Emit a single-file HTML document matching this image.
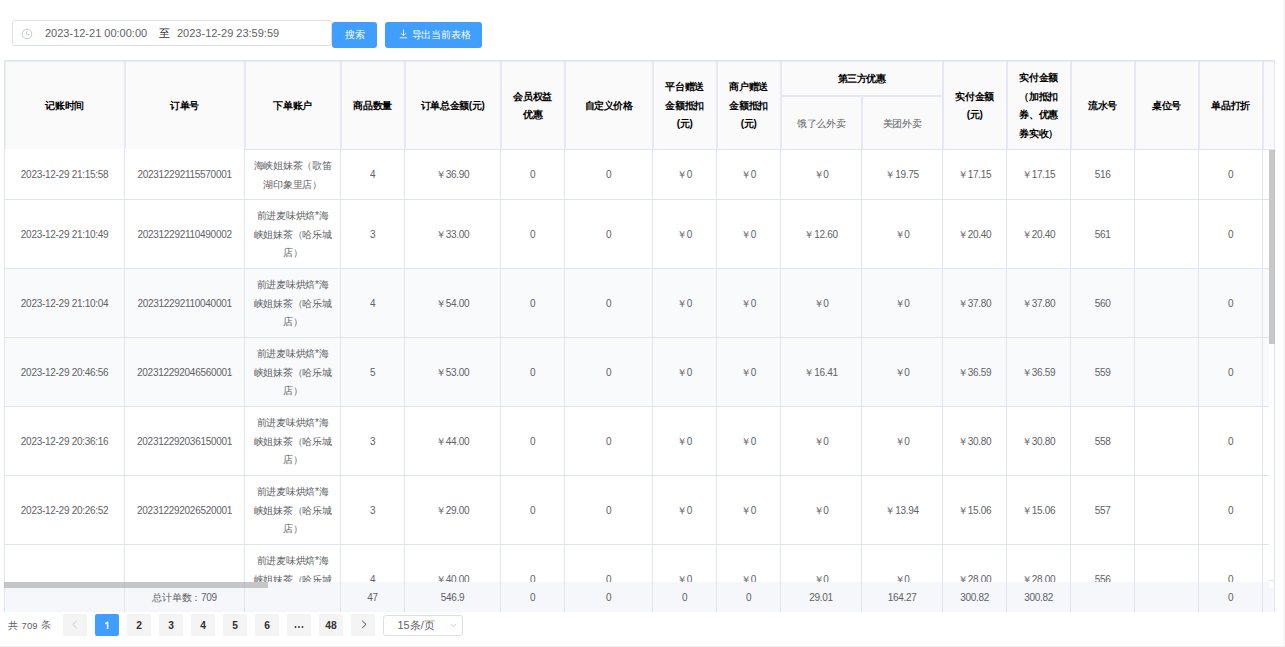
<!DOCTYPE html>
<html><head><meta charset="utf-8"><style>
html,body{margin:0;padding:0;background:#fff;}
body{width:1285px;height:647px;position:relative;overflow:hidden;font-family:"Liberation Sans",sans-serif;}
div{position:absolute;}
.t,.h{text-align:center;white-space:nowrap;}
.t{font-size:10px;letter-spacing:-0.28px;color:#606266;}
.h{font-size:10px;letter-spacing:-0.4px;color:#000000;font-weight:bold;}
</style></head><body>
<div style="left:12px;top:20px;width:320px;height:26px;border:1px solid #DCDFE6;border-radius:3px;box-sizing:border-box;background:#fff"></div>
<svg style="position:absolute;left:21px;top:28px" width="12" height="12" viewBox="0 0 12 12"><circle cx="6" cy="6" r="4.8" fill="none" stroke="#C0C4CC" stroke-width="0.9"/><path d="M5.6 3.2V6.3H8" fill="none" stroke="#C0C4CC" stroke-width="0.9"/></svg>
<div class="t" style="left:45px;top:26.20px;width:115px;height:14px;line-height:14px;font-size:11px;letter-spacing:0;color:#606266;text-align:left">2023-12-21 00:00:00</div>
<div class="t" style="left:154px;top:26.20px;width:20px;height:14px;line-height:14px;font-size:11px;letter-spacing:0;color:#303133;text-align:center">至</div>
<div class="t" style="left:177px;top:26.20px;width:123px;height:14px;line-height:14px;font-size:11px;letter-spacing:0;color:#606266;text-align:left">2023-12-29 23:59:59</div>
<div style="left:332px;top:22px;width:45px;height:25.5px;background:#409EFF;border-radius:3px"></div>
<div class="t" style="left:332.5px;top:27.80px;width:45.0px;height:14px;line-height:14px;font-size:10px;letter-spacing:0;color:#fff;font-weight:500">搜索</div>
<div style="left:385px;top:22px;width:97px;height:25.5px;background:#409EFF;border-radius:3px"></div>
<svg style="position:absolute;left:399px;top:29px" width="9" height="10" viewBox="0 0 9 10"><path d="M4.5 0.5V6.5M2 4.2L4.5 6.7L7 4.2M0.8 8.8H8.2" fill="none" stroke="#fff" stroke-width="0.9"/></svg>
<div class="t" style="left:411.5px;top:27.80px;width:63.5px;height:14px;line-height:14px;font-size:10px;letter-spacing:-0.1px;color:#fff;text-align:left;font-weight:500">导出当前表格</div>
<div style="left:4px;top:60px;width:1270px;height:89px;background:#FAFAFA"></div>
<div style="left:4px;top:269px;width:1265px;height:137px;background:#F9FAFC"></div>
<div style="left:4px;top:582px;width:1270px;height:30px;background:#F5F7FA"></div>
<div style="left:4px;top:60px;width:1271px;height:1px;background:#DFE5EC"></div>
<div style="left:4px;top:61px;width:1271px;height:1px;background:#E9ECF5"></div>
<div style="left:4px;top:150px;width:1px;height:462px;background:#DFE5EC"></div>
<div style="left:4px;top:60px;width:1px;height:90px;background:#DFE5EC"></div>
<div style="left:5px;top:61px;width:1px;height:88px;background:#E9ECF5"></div>
<div style="left:124px;top:150px;width:1px;height:462px;background:#DFE5EC"></div>
<div style="left:124px;top:61px;width:2px;height:88px;background:#E6E9F4"></div>
<div style="left:244px;top:150px;width:1px;height:462px;background:#DFE5EC"></div>
<div style="left:244px;top:61px;width:2px;height:88px;background:#E6E9F4"></div>
<div style="left:340px;top:150px;width:1px;height:462px;background:#DFE5EC"></div>
<div style="left:340px;top:61px;width:2px;height:88px;background:#E6E9F4"></div>
<div style="left:404px;top:150px;width:1px;height:462px;background:#DFE5EC"></div>
<div style="left:404px;top:61px;width:2px;height:88px;background:#E6E9F4"></div>
<div style="left:500px;top:150px;width:1px;height:462px;background:#DFE5EC"></div>
<div style="left:500px;top:61px;width:2px;height:88px;background:#E6E9F4"></div>
<div style="left:564px;top:150px;width:1px;height:462px;background:#DFE5EC"></div>
<div style="left:564px;top:61px;width:2px;height:88px;background:#E6E9F4"></div>
<div style="left:652px;top:150px;width:1px;height:462px;background:#DFE5EC"></div>
<div style="left:652px;top:61px;width:2px;height:88px;background:#E6E9F4"></div>
<div style="left:716px;top:150px;width:1px;height:462px;background:#DFE5EC"></div>
<div style="left:716px;top:61px;width:2px;height:88px;background:#E6E9F4"></div>
<div style="left:780px;top:150px;width:1px;height:462px;background:#DFE5EC"></div>
<div style="left:780px;top:61px;width:2px;height:88px;background:#E6E9F4"></div>
<div style="left:861px;top:150px;width:1px;height:462px;background:#DFE5EC"></div>
<div style="left:861px;top:96px;width:2px;height:53px;background:#E6E9F4"></div>
<div style="left:942px;top:150px;width:1px;height:462px;background:#DFE5EC"></div>
<div style="left:942px;top:61px;width:2px;height:88px;background:#E6E9F4"></div>
<div style="left:1006px;top:150px;width:1px;height:462px;background:#DFE5EC"></div>
<div style="left:1006px;top:61px;width:2px;height:88px;background:#E6E9F4"></div>
<div style="left:1070px;top:150px;width:1px;height:462px;background:#DFE5EC"></div>
<div style="left:1070px;top:61px;width:2px;height:88px;background:#E6E9F4"></div>
<div style="left:1134px;top:150px;width:1px;height:462px;background:#DFE5EC"></div>
<div style="left:1134px;top:61px;width:2px;height:88px;background:#E6E9F4"></div>
<div style="left:1198px;top:150px;width:1px;height:462px;background:#DFE5EC"></div>
<div style="left:1198px;top:61px;width:2px;height:88px;background:#E6E9F4"></div>
<div style="left:1262px;top:150px;width:1px;height:462px;background:#DFE5EC"></div>
<div style="left:1262px;top:61px;width:2px;height:88px;background:#E6E9F4"></div>
<div style="left:1274px;top:150px;width:1px;height:462px;background:#DFE5EC"></div>
<div style="left:1274px;top:61px;width:1px;height:88px;background:#E6E9F4"></div>
<div style="left:780px;top:95px;width:162px;height:2px;background:#E6E9F4"></div>
<div style="left:244px;top:149px;width:1031px;height:1px;background:#DFE5EC"></div>
<div style="left:4px;top:199px;width:1265px;height:1px;background:#DFE5EC"></div>
<div style="left:4px;top:268px;width:1265px;height:1px;background:#DFE5EC"></div>
<div style="left:4px;top:337px;width:1265px;height:1px;background:#DFE5EC"></div>
<div style="left:4px;top:406px;width:1265px;height:1px;background:#DFE5EC"></div>
<div style="left:4px;top:475px;width:1265px;height:1px;background:#DFE5EC"></div>
<div style="left:4px;top:544px;width:1265px;height:1px;background:#DFE5EC"></div>
<div class="h" style="left:4.6px;top:98.90px;width:120.0px;height:14px;line-height:14px;">记账时间</div>
<div class="h" style="left:124.6px;top:98.90px;width:120.0px;height:14px;line-height:14px;">订单号</div>
<div class="h" style="left:244.6px;top:98.90px;width:96.00000000000003px;height:14px;line-height:14px;">下单账户</div>
<div class="h" style="left:340.6px;top:98.90px;width:64.0px;height:14px;line-height:14px;">商品数量</div>
<div class="h" style="left:404.6px;top:98.90px;width:96.0px;height:14px;line-height:14px;">订单总金额(元)</div>
<div class="h" style="left:500.6px;top:89.65px;width:64.0px;height:14px;line-height:14px;">会员权益</div>
<div class="h" style="left:500.6px;top:108.15px;width:64.0px;height:14px;line-height:14px;">优惠</div>
<div class="h" style="left:564.6px;top:98.90px;width:88.0px;height:14px;line-height:14px;">自定义价格</div>
<div class="h" style="left:652.6px;top:80.40px;width:64.0px;height:14px;line-height:14px;">平台赠送</div>
<div class="h" style="left:652.6px;top:98.90px;width:64.0px;height:14px;line-height:14px;">金额抵扣</div>
<div class="h" style="left:652.6px;top:117.40px;width:64.0px;height:14px;line-height:14px;">(元)</div>
<div class="h" style="left:716.6px;top:80.40px;width:64.0px;height:14px;line-height:14px;">商户赠送</div>
<div class="h" style="left:716.6px;top:98.90px;width:64.0px;height:14px;line-height:14px;">金额抵扣</div>
<div class="h" style="left:716.6px;top:117.40px;width:64.0px;height:14px;line-height:14px;">(元)</div>
<div class="h" style="left:780.6px;top:71.90px;width:162.0px;height:14px;line-height:14px;">第三方优惠</div>
<div class="t" style="left:780.6px;top:116.90px;width:81.0px;height:14px;line-height:14px;">饿了么外卖</div>
<div class="t" style="left:861.6px;top:116.90px;width:81.0px;height:14px;line-height:14px;">美团外卖</div>
<div class="h" style="left:942.6px;top:89.65px;width:64.0px;height:14px;line-height:14px;">实付金额</div>
<div class="h" style="left:942.6px;top:108.15px;width:64.0px;height:14px;line-height:14px;">(元)</div>
<div class="h" style="left:1006.6px;top:71.15px;width:63.999999999999886px;height:14px;line-height:14px;">实付金额</div>
<div class="h" style="left:1006.6px;top:89.65px;width:63.999999999999886px;height:14px;line-height:14px;">（加抵扣</div>
<div class="h" style="left:1006.6px;top:108.15px;width:63.999999999999886px;height:14px;line-height:14px;">券、优惠</div>
<div class="h" style="left:1006.6px;top:126.65px;width:63.999999999999886px;height:14px;line-height:14px;">券实收）</div>
<div class="h" style="left:1070.6px;top:98.90px;width:64.0px;height:14px;line-height:14px;">流水号</div>
<div class="h" style="left:1134.6px;top:98.90px;width:64.0px;height:14px;line-height:14px;">桌位号</div>
<div class="h" style="left:1198.6px;top:98.90px;width:64.0px;height:14px;line-height:14px;">单品打折</div>
<div style="left:0;top:0;width:1285px;height:582px;overflow:hidden">
<div class="t" style="left:4.6px;top:168.40px;width:120.0px;height:14px;line-height:14px;">2023-12-29 21:15:58</div>
<div class="t" style="left:124.6px;top:168.40px;width:120.0px;height:14px;line-height:14px;">202312292115570001</div>
<div class="t" style="left:244.6px;top:159.15px;width:96.00000000000003px;height:14px;line-height:14px;">海峡姐妹茶（歌笛</div>
<div class="t" style="left:244.6px;top:177.65px;width:96.00000000000003px;height:14px;line-height:14px;">湖印象里店）</div>
<div class="t" style="left:340.6px;top:168.40px;width:64.0px;height:14px;line-height:14px;">4</div>
<div class="t" style="left:404.6px;top:168.40px;width:96.0px;height:14px;line-height:14px;">￥36.90</div>
<div class="t" style="left:500.6px;top:168.40px;width:64.0px;height:14px;line-height:14px;">0</div>
<div class="t" style="left:564.6px;top:168.40px;width:88.0px;height:14px;line-height:14px;">0</div>
<div class="t" style="left:652.6px;top:168.40px;width:64.0px;height:14px;line-height:14px;">￥0</div>
<div class="t" style="left:716.6px;top:168.40px;width:64.0px;height:14px;line-height:14px;">￥0</div>
<div class="t" style="left:780.6px;top:168.40px;width:81.0px;height:14px;line-height:14px;">￥0</div>
<div class="t" style="left:861.6px;top:168.40px;width:81.0px;height:14px;line-height:14px;">￥19.75</div>
<div class="t" style="left:942.6px;top:168.40px;width:64.0px;height:14px;line-height:14px;">￥17.15</div>
<div class="t" style="left:1006.6px;top:168.40px;width:63.999999999999886px;height:14px;line-height:14px;">￥17.15</div>
<div class="t" style="left:1070.6px;top:168.40px;width:64.0px;height:14px;line-height:14px;">516</div>
<div class="t" style="left:1198.6px;top:168.40px;width:64.0px;height:14px;line-height:14px;">0</div>
<div class="t" style="left:4.6px;top:227.90px;width:120.0px;height:14px;line-height:14px;">2023-12-29 21:10:49</div>
<div class="t" style="left:124.6px;top:227.90px;width:120.0px;height:14px;line-height:14px;">202312292110490002</div>
<div class="t" style="left:244.6px;top:209.40px;width:96.00000000000003px;height:14px;line-height:14px;">前进麦味烘焙*海</div>
<div class="t" style="left:244.6px;top:227.90px;width:96.00000000000003px;height:14px;line-height:14px;">峡姐妹茶（哈乐城</div>
<div class="t" style="left:244.6px;top:246.40px;width:96.00000000000003px;height:14px;line-height:14px;">店）</div>
<div class="t" style="left:340.6px;top:227.90px;width:64.0px;height:14px;line-height:14px;">3</div>
<div class="t" style="left:404.6px;top:227.90px;width:96.0px;height:14px;line-height:14px;">￥33.00</div>
<div class="t" style="left:500.6px;top:227.90px;width:64.0px;height:14px;line-height:14px;">0</div>
<div class="t" style="left:564.6px;top:227.90px;width:88.0px;height:14px;line-height:14px;">0</div>
<div class="t" style="left:652.6px;top:227.90px;width:64.0px;height:14px;line-height:14px;">￥0</div>
<div class="t" style="left:716.6px;top:227.90px;width:64.0px;height:14px;line-height:14px;">￥0</div>
<div class="t" style="left:780.6px;top:227.90px;width:81.0px;height:14px;line-height:14px;">￥12.60</div>
<div class="t" style="left:861.6px;top:227.90px;width:81.0px;height:14px;line-height:14px;">￥0</div>
<div class="t" style="left:942.6px;top:227.90px;width:64.0px;height:14px;line-height:14px;">￥20.40</div>
<div class="t" style="left:1006.6px;top:227.90px;width:63.999999999999886px;height:14px;line-height:14px;">￥20.40</div>
<div class="t" style="left:1070.6px;top:227.90px;width:64.0px;height:14px;line-height:14px;">561</div>
<div class="t" style="left:1198.6px;top:227.90px;width:64.0px;height:14px;line-height:14px;">0</div>
<div class="t" style="left:4.6px;top:296.90px;width:120.0px;height:14px;line-height:14px;">2023-12-29 21:10:04</div>
<div class="t" style="left:124.6px;top:296.90px;width:120.0px;height:14px;line-height:14px;">202312292110040001</div>
<div class="t" style="left:244.6px;top:278.40px;width:96.00000000000003px;height:14px;line-height:14px;">前进麦味烘焙*海</div>
<div class="t" style="left:244.6px;top:296.90px;width:96.00000000000003px;height:14px;line-height:14px;">峡姐妹茶（哈乐城</div>
<div class="t" style="left:244.6px;top:315.40px;width:96.00000000000003px;height:14px;line-height:14px;">店）</div>
<div class="t" style="left:340.6px;top:296.90px;width:64.0px;height:14px;line-height:14px;">4</div>
<div class="t" style="left:404.6px;top:296.90px;width:96.0px;height:14px;line-height:14px;">￥54.00</div>
<div class="t" style="left:500.6px;top:296.90px;width:64.0px;height:14px;line-height:14px;">0</div>
<div class="t" style="left:564.6px;top:296.90px;width:88.0px;height:14px;line-height:14px;">0</div>
<div class="t" style="left:652.6px;top:296.90px;width:64.0px;height:14px;line-height:14px;">￥0</div>
<div class="t" style="left:716.6px;top:296.90px;width:64.0px;height:14px;line-height:14px;">￥0</div>
<div class="t" style="left:780.6px;top:296.90px;width:81.0px;height:14px;line-height:14px;">￥0</div>
<div class="t" style="left:861.6px;top:296.90px;width:81.0px;height:14px;line-height:14px;">￥0</div>
<div class="t" style="left:942.6px;top:296.90px;width:64.0px;height:14px;line-height:14px;">￥37.80</div>
<div class="t" style="left:1006.6px;top:296.90px;width:63.999999999999886px;height:14px;line-height:14px;">￥37.80</div>
<div class="t" style="left:1070.6px;top:296.90px;width:64.0px;height:14px;line-height:14px;">560</div>
<div class="t" style="left:1198.6px;top:296.90px;width:64.0px;height:14px;line-height:14px;">0</div>
<div class="t" style="left:4.6px;top:365.90px;width:120.0px;height:14px;line-height:14px;">2023-12-29 20:46:56</div>
<div class="t" style="left:124.6px;top:365.90px;width:120.0px;height:14px;line-height:14px;">202312292046560001</div>
<div class="t" style="left:244.6px;top:347.40px;width:96.00000000000003px;height:14px;line-height:14px;">前进麦味烘焙*海</div>
<div class="t" style="left:244.6px;top:365.90px;width:96.00000000000003px;height:14px;line-height:14px;">峡姐妹茶（哈乐城</div>
<div class="t" style="left:244.6px;top:384.40px;width:96.00000000000003px;height:14px;line-height:14px;">店）</div>
<div class="t" style="left:340.6px;top:365.90px;width:64.0px;height:14px;line-height:14px;">5</div>
<div class="t" style="left:404.6px;top:365.90px;width:96.0px;height:14px;line-height:14px;">￥53.00</div>
<div class="t" style="left:500.6px;top:365.90px;width:64.0px;height:14px;line-height:14px;">0</div>
<div class="t" style="left:564.6px;top:365.90px;width:88.0px;height:14px;line-height:14px;">0</div>
<div class="t" style="left:652.6px;top:365.90px;width:64.0px;height:14px;line-height:14px;">￥0</div>
<div class="t" style="left:716.6px;top:365.90px;width:64.0px;height:14px;line-height:14px;">￥0</div>
<div class="t" style="left:780.6px;top:365.90px;width:81.0px;height:14px;line-height:14px;">￥16.41</div>
<div class="t" style="left:861.6px;top:365.90px;width:81.0px;height:14px;line-height:14px;">￥0</div>
<div class="t" style="left:942.6px;top:365.90px;width:64.0px;height:14px;line-height:14px;">￥36.59</div>
<div class="t" style="left:1006.6px;top:365.90px;width:63.999999999999886px;height:14px;line-height:14px;">￥36.59</div>
<div class="t" style="left:1070.6px;top:365.90px;width:64.0px;height:14px;line-height:14px;">559</div>
<div class="t" style="left:1198.6px;top:365.90px;width:64.0px;height:14px;line-height:14px;">0</div>
<div class="t" style="left:4.6px;top:434.90px;width:120.0px;height:14px;line-height:14px;">2023-12-29 20:36:16</div>
<div class="t" style="left:124.6px;top:434.90px;width:120.0px;height:14px;line-height:14px;">202312292036150001</div>
<div class="t" style="left:244.6px;top:416.40px;width:96.00000000000003px;height:14px;line-height:14px;">前进麦味烘焙*海</div>
<div class="t" style="left:244.6px;top:434.90px;width:96.00000000000003px;height:14px;line-height:14px;">峡姐妹茶（哈乐城</div>
<div class="t" style="left:244.6px;top:453.40px;width:96.00000000000003px;height:14px;line-height:14px;">店）</div>
<div class="t" style="left:340.6px;top:434.90px;width:64.0px;height:14px;line-height:14px;">3</div>
<div class="t" style="left:404.6px;top:434.90px;width:96.0px;height:14px;line-height:14px;">￥44.00</div>
<div class="t" style="left:500.6px;top:434.90px;width:64.0px;height:14px;line-height:14px;">0</div>
<div class="t" style="left:564.6px;top:434.90px;width:88.0px;height:14px;line-height:14px;">0</div>
<div class="t" style="left:652.6px;top:434.90px;width:64.0px;height:14px;line-height:14px;">￥0</div>
<div class="t" style="left:716.6px;top:434.90px;width:64.0px;height:14px;line-height:14px;">￥0</div>
<div class="t" style="left:780.6px;top:434.90px;width:81.0px;height:14px;line-height:14px;">￥0</div>
<div class="t" style="left:861.6px;top:434.90px;width:81.0px;height:14px;line-height:14px;">￥0</div>
<div class="t" style="left:942.6px;top:434.90px;width:64.0px;height:14px;line-height:14px;">￥30.80</div>
<div class="t" style="left:1006.6px;top:434.90px;width:63.999999999999886px;height:14px;line-height:14px;">￥30.80</div>
<div class="t" style="left:1070.6px;top:434.90px;width:64.0px;height:14px;line-height:14px;">558</div>
<div class="t" style="left:1198.6px;top:434.90px;width:64.0px;height:14px;line-height:14px;">0</div>
<div class="t" style="left:4.6px;top:503.90px;width:120.0px;height:14px;line-height:14px;">2023-12-29 20:26:52</div>
<div class="t" style="left:124.6px;top:503.90px;width:120.0px;height:14px;line-height:14px;">202312292026520001</div>
<div class="t" style="left:244.6px;top:485.40px;width:96.00000000000003px;height:14px;line-height:14px;">前进麦味烘焙*海</div>
<div class="t" style="left:244.6px;top:503.90px;width:96.00000000000003px;height:14px;line-height:14px;">峡姐妹茶（哈乐城</div>
<div class="t" style="left:244.6px;top:522.40px;width:96.00000000000003px;height:14px;line-height:14px;">店）</div>
<div class="t" style="left:340.6px;top:503.90px;width:64.0px;height:14px;line-height:14px;">3</div>
<div class="t" style="left:404.6px;top:503.90px;width:96.0px;height:14px;line-height:14px;">￥29.00</div>
<div class="t" style="left:500.6px;top:503.90px;width:64.0px;height:14px;line-height:14px;">0</div>
<div class="t" style="left:564.6px;top:503.90px;width:88.0px;height:14px;line-height:14px;">0</div>
<div class="t" style="left:652.6px;top:503.90px;width:64.0px;height:14px;line-height:14px;">￥0</div>
<div class="t" style="left:716.6px;top:503.90px;width:64.0px;height:14px;line-height:14px;">￥0</div>
<div class="t" style="left:780.6px;top:503.90px;width:81.0px;height:14px;line-height:14px;">￥0</div>
<div class="t" style="left:861.6px;top:503.90px;width:81.0px;height:14px;line-height:14px;">￥13.94</div>
<div class="t" style="left:942.6px;top:503.90px;width:64.0px;height:14px;line-height:14px;">￥15.06</div>
<div class="t" style="left:1006.6px;top:503.90px;width:63.999999999999886px;height:14px;line-height:14px;">￥15.06</div>
<div class="t" style="left:1070.6px;top:503.90px;width:64.0px;height:14px;line-height:14px;">557</div>
<div class="t" style="left:1198.6px;top:503.90px;width:64.0px;height:14px;line-height:14px;">0</div>
<div class="t" style="left:244.6px;top:554.40px;width:96.00000000000003px;height:14px;line-height:14px;">前进麦味烘焙*海</div>
<div class="t" style="left:244.6px;top:572.90px;width:96.00000000000003px;height:14px;line-height:14px;">峡姐妹茶（哈乐城</div>
<div class="t" style="left:244.6px;top:591.40px;width:96.00000000000003px;height:14px;line-height:14px;">店）</div>
<div class="t" style="left:340.6px;top:572.90px;width:64.0px;height:14px;line-height:14px;">4</div>
<div class="t" style="left:404.6px;top:572.90px;width:96.0px;height:14px;line-height:14px;">￥40.00</div>
<div class="t" style="left:500.6px;top:572.90px;width:64.0px;height:14px;line-height:14px;">0</div>
<div class="t" style="left:564.6px;top:572.90px;width:88.0px;height:14px;line-height:14px;">0</div>
<div class="t" style="left:652.6px;top:572.90px;width:64.0px;height:14px;line-height:14px;">￥0</div>
<div class="t" style="left:716.6px;top:572.90px;width:64.0px;height:14px;line-height:14px;">￥0</div>
<div class="t" style="left:780.6px;top:572.90px;width:81.0px;height:14px;line-height:14px;">￥0</div>
<div class="t" style="left:861.6px;top:572.90px;width:81.0px;height:14px;line-height:14px;">￥0</div>
<div class="t" style="left:942.6px;top:572.90px;width:64.0px;height:14px;line-height:14px;">￥28.00</div>
<div class="t" style="left:1006.6px;top:572.90px;width:63.999999999999886px;height:14px;line-height:14px;">￥28.00</div>
<div class="t" style="left:1070.6px;top:572.90px;width:64.0px;height:14px;line-height:14px;">556</div>
<div class="t" style="left:1198.6px;top:572.90px;width:64.0px;height:14px;line-height:14px;">0</div>
</div>
<div class="t" style="left:124.6px;top:590.90px;width:120.0px;height:14px;line-height:14px;">总计单数：709</div>
<div class="t" style="left:340.6px;top:590.90px;width:64.0px;height:14px;line-height:14px;">47</div>
<div class="t" style="left:404.6px;top:590.90px;width:96.0px;height:14px;line-height:14px;">546.9</div>
<div class="t" style="left:500.6px;top:590.90px;width:64.0px;height:14px;line-height:14px;">0</div>
<div class="t" style="left:564.6px;top:590.90px;width:88.0px;height:14px;line-height:14px;">0</div>
<div class="t" style="left:652.6px;top:590.90px;width:64.0px;height:14px;line-height:14px;">0</div>
<div class="t" style="left:716.6px;top:590.90px;width:64.0px;height:14px;line-height:14px;">0</div>
<div class="t" style="left:780.6px;top:590.90px;width:81.0px;height:14px;line-height:14px;">29.01</div>
<div class="t" style="left:861.6px;top:590.90px;width:81.0px;height:14px;line-height:14px;">164.27</div>
<div class="t" style="left:942.6px;top:590.90px;width:64.0px;height:14px;line-height:14px;">300.82</div>
<div class="t" style="left:1006.6px;top:590.90px;width:63.999999999999886px;height:14px;line-height:14px;">300.82</div>
<div class="t" style="left:1198.6px;top:590.90px;width:64.0px;height:14px;line-height:14px;">0</div>
<div style="left:4px;top:582px;width:264px;height:6px;background:rgba(160,162,166,0.58)"></div>
<div style="left:1269px;top:580px;width:6px;height:1px;background:#DFE5EC"></div>
<div style="left:1269px;top:582px;width:5px;height:6px;background:#fff"></div>
<div style="left:1269px;top:150px;width:5px;height:194px;background:#C8C8C8"></div>
<div style="left:1274px;top:150px;width:1px;height:194px;background:#B9BEC6"></div>
<div class="t" style="left:7.5px;top:618.80px;width:22.5px;height:14px;line-height:14px;font-size:10px;letter-spacing:0;text-align:left">共</div>
<div class="t" style="left:21.6px;top:618.80px;width:28.4px;height:14px;line-height:14px;font-size:9.5px;letter-spacing:0;text-align:left">709</div>
<div class="t" style="left:40.8px;top:618.10px;width:19.200000000000003px;height:14px;line-height:14px;font-size:10.2px;letter-spacing:0;text-align:left">条</div>
<div style="left:63.3px;top:614px;width:23.5px;height:21.5px;background:#F4F4F5;border-radius:2px"></div>
<svg style="position:absolute;left:71px;top:620px" width="8" height="9" viewBox="0 0 8 9"><path d="M5.6 0.8L1.8 4.4L5.6 8" fill="none" stroke="#C0C4CC" stroke-width="0.9"/></svg>
<div style="left:95.3px;top:614px;width:23.5px;height:21.5px;background:#409EFF;border-radius:2px"></div>
<svg style="position:absolute;left:104px;top:621px" width="6" height="9" viewBox="0 0 6 9"><path d="M1.2 2.9L3.6 1.2V8.1" fill="none" stroke="#fff" stroke-width="1.5" stroke-linejoin="round"/></svg>
<div style="left:127.3px;top:614px;width:23.5px;height:21.5px;background:#F4F4F5;border-radius:2px"></div>
<div class="t" style="left:127.3px;top:618.60px;width:23.500000000000014px;height:14px;line-height:14px;font-size:10.3px;letter-spacing:0;font-weight:bold;color:#303133">2</div>
<div style="left:159.3px;top:614px;width:23.5px;height:21.5px;background:#F4F4F5;border-radius:2px"></div>
<div class="t" style="left:159.3px;top:618.60px;width:23.5px;height:14px;line-height:14px;font-size:10.3px;letter-spacing:0;font-weight:bold;color:#303133">3</div>
<div style="left:191.3px;top:614px;width:23.5px;height:21.5px;background:#F4F4F5;border-radius:2px"></div>
<div class="t" style="left:191.3px;top:618.60px;width:23.5px;height:14px;line-height:14px;font-size:10.3px;letter-spacing:0;font-weight:bold;color:#303133">4</div>
<div style="left:223.3px;top:614px;width:23.5px;height:21.5px;background:#F4F4F5;border-radius:2px"></div>
<div class="t" style="left:223.3px;top:618.60px;width:23.5px;height:14px;line-height:14px;font-size:10.3px;letter-spacing:0;font-weight:bold;color:#303133">5</div>
<div style="left:255.3px;top:614px;width:23.5px;height:21.5px;background:#F4F4F5;border-radius:2px"></div>
<div class="t" style="left:255.3px;top:618.60px;width:23.5px;height:14px;line-height:14px;font-size:10.3px;letter-spacing:0;font-weight:bold;color:#303133">6</div>
<div style="left:287.3px;top:614px;width:23.5px;height:21.5px;background:#F4F4F5;border-radius:2px"></div>
<svg style="position:absolute;left:294px;top:625px" width="10" height="4" viewBox="0 0 10 4"><circle cx="1.5" cy="2" r="0.95" fill="#303133"/><circle cx="5" cy="2" r="0.95" fill="#303133"/><circle cx="8.5" cy="2" r="0.95" fill="#303133"/></svg>
<div style="left:319.3px;top:614px;width:23.5px;height:21.5px;background:#F4F4F5;border-radius:2px"></div>
<div class="t" style="left:319.3px;top:618.60px;width:23.5px;height:14px;line-height:14px;font-size:10.3px;letter-spacing:0;font-weight:bold;color:#303133">48</div>
<div style="left:351.3px;top:614px;width:23.5px;height:21.5px;background:#F4F4F5;border-radius:2px"></div>
<svg style="position:absolute;left:359.5px;top:620px" width="8" height="9" viewBox="0 0 8 9"><path d="M2.2 0.8L6 4.4L2.2 8" fill="none" stroke="#303133" stroke-width="0.9"/></svg>
<div style="left:383.3px;top:614.5px;width:79.5px;height:21.3px;border:1px solid #DCDFE6;border-radius:3px;box-sizing:border-box;background:#fff"></div>
<div class="t" style="left:397.5px;top:618.20px;width:54.5px;height:14px;line-height:14px;font-size:10.8px;letter-spacing:0.1px;text-align:left">15条/页</div>
<svg style="position:absolute;left:450px;top:623px" width="7" height="5" viewBox="0 0 7 5"><path d="M0.6 0.8L3.5 3.8L6.4 0.8" fill="none" stroke="#C0C4CC" stroke-width="0.8"/></svg>
<div style="left:1283px;top:0px;width:2px;height:647px;background:#F7F7F7"></div>
<div style="left:0px;top:646px;width:1285px;height:1px;background:#F1F1F1"></div>
</body></html>
